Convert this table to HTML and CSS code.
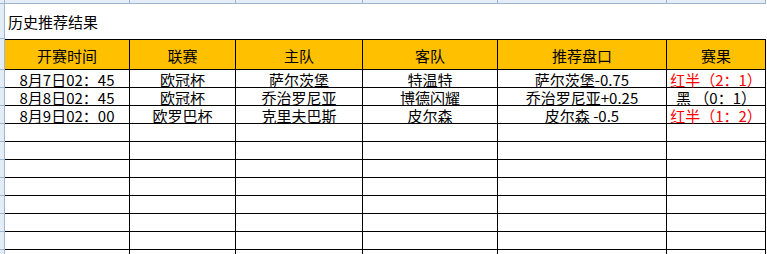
FILE: index.html
```html
<!DOCTYPE html>
<html lang="zh-CN">
<head>
<meta charset="utf-8">
<title>历史推荐结果</title>
<link rel="stylesheet" href="styles.css">
</head>
<body>
<div class="sheet">
  <div class="top corner"></div>
  <div class="top"></div>
  <div class="top"></div>
  <div class="top"></div>
  <div class="top"></div>
  <div class="top"></div>
  <div class="top"></div>

  <div class="gut"></div>
  <div class="title">历史推荐结果</div>

  <div class="gut"></div>
  <div class="cell head">开赛时间</div>
  <div class="cell head">联赛</div>
  <div class="cell head">主队</div>
  <div class="cell head">客队</div>
  <div class="cell head">推荐盘口</div>
  <div class="cell head">赛果</div>

  <div class="gut"></div>
  <div class="cell">8月7日02：45</div>
  <div class="cell">欧冠杯</div>
  <div class="cell">萨尔茨堡</div>
  <div class="cell">特温特</div>
  <div class="cell">萨尔茨堡-0.75</div>
  <div class="cell red">红半（2：1）</div>

  <div class="gut"></div>
  <div class="cell">8月8日02：45</div>
  <div class="cell">欧冠杯</div>
  <div class="cell">乔治罗尼亚</div>
  <div class="cell">博德闪耀</div>
  <div class="cell">乔治罗尼亚+0.25</div>
  <div class="cell">黑 （0：1）</div>

  <div class="gut"></div>
  <div class="cell">8月9日02：00</div>
  <div class="cell">欧罗巴杯</div>
  <div class="cell">克里夫巴斯</div>
  <div class="cell">皮尔森</div>
  <div class="cell">皮尔森 -0.5</div>
  <div class="cell red">红半（1：2）</div>

  <div class="gut"></div><div class="cell"></div><div class="cell"></div><div class="cell"></div><div class="cell"></div><div class="cell"></div><div class="cell"></div>
  <div class="gut"></div><div class="cell"></div><div class="cell"></div><div class="cell"></div><div class="cell"></div><div class="cell"></div><div class="cell"></div>
  <div class="gut"></div><div class="cell"></div><div class="cell"></div><div class="cell"></div><div class="cell"></div><div class="cell"></div><div class="cell"></div>
  <div class="gut"></div><div class="cell"></div><div class="cell"></div><div class="cell"></div><div class="cell"></div><div class="cell"></div><div class="cell"></div>
  <div class="gut"></div><div class="cell"></div><div class="cell"></div><div class="cell"></div><div class="cell"></div><div class="cell"></div><div class="cell"></div>
  <div class="gut"></div><div class="cell"></div><div class="cell"></div><div class="cell"></div><div class="cell"></div><div class="cell"></div><div class="cell"></div>
  <div class="gut"></div><div class="cell"></div><div class="cell"></div><div class="cell"></div><div class="cell"></div><div class="cell"></div><div class="cell"></div>
  <div class="gut"></div><div class="cell"></div><div class="cell"></div><div class="cell"></div><div class="cell"></div><div class="cell"></div><div class="cell"></div>
</div>
</body>
</html>
```

FILE: styles.css
```css
html, body {
  margin: 0;
  padding: 0;
  background: #ffffff;
  overflow: hidden;
}
body {
  width: 767px;
  height: 254px;
  font-family: "Noto Sans CJK SC", "Noto Sans", sans-serif;
  font-size: 15px;
  color: #000000;
}
.sheet {
  display: grid;
  grid-template-columns: 5px 125px 106px 127px 135px 169px 99px;
  grid-template-rows: 4px 35px 31px repeat(11, 18px);
  height: 254px;
  overflow: hidden;
}
.top {
  box-sizing: border-box;
  background: #e4ecf7;
  border-bottom: 1px solid #9eb6ce;
  border-right: 1px solid #9eb6ce;
}
.gut {
  box-sizing: border-box;
  background: #e4ecf7;
  border-right: 1px solid #9eb6ce;
  border-bottom: 1px solid #9eb6ce;
}
.title {
  grid-column: 2 / span 6;
  display: flex;
  align-items: center;
  padding-left: 3px;
  white-space: nowrap;
  line-height: 1;
}
.cell {
  box-sizing: border-box;
  border-right: 1px solid #000000;
  border-bottom: 1px solid #000000;
  display: flex;
  align-items: center;
  justify-content: center;
  white-space: pre;
  line-height: 1;
  padding-top: 1px;
}
.head {
  background: #ffc000;
  border-top: 1px solid #000000;
  padding-top: 2px;
}
.red {
  color: #ff0000;
}
```
